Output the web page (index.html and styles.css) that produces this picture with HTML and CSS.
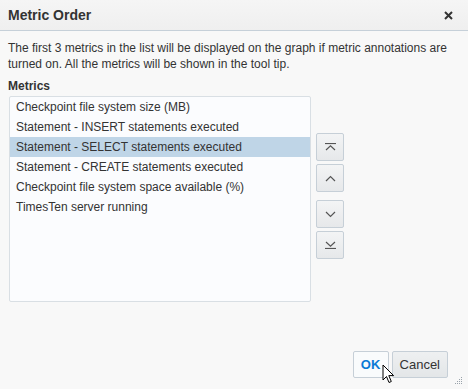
FILE: index.html
```html
<!DOCTYPE html>
<html lang="en">
<head>
  <meta charset="UTF-8">
  <meta name="viewport" content="width=device-width, initial-scale=1.0">
  <title>Metric Order</title>
  <link rel="stylesheet" href="styles.css">
</head>
<body>

  <div class="dialog">
    <div class="titlebar">
      <span class="title">Metric Order</span>
      <span class="close">
        <svg width="9" height="9" viewBox="0 0 9 9"><path d="M1 1L8 8M8 1L1 8" stroke="#333" stroke-width="2"/></svg>
      </span>
    </div>

    <div class="content">
      <p class="desc">The first 3 metrics in the list will be displayed on the graph if metric annotations are turned on. All the metrics will be shown in the tool tip.</p>
      <div class="label">Metrics</div>

      <div class="picker">
        <ul class="list">
          <li>Checkpoint file system size (MB)</li>
          <li>Statement - INSERT statements executed</li>
          <li class="selected">Statement - SELECT statements executed</li>
          <li>Statement - CREATE statements executed</li>
          <li>Checkpoint file system space available (%)</li>
          <li>TimesTen server running</li>
        </ul>

        <div class="movers">
          <div class="group">
            <button class="mover" title="Move to top">
              <svg width="11" height="8" viewBox="0 0 11 8"><path d="M0 0.5H11" stroke="#555" stroke-width="1.2"/><path d="M1 7L5.5 2.8L10 7" fill="none" stroke="#555" stroke-width="1.2"/></svg>
            </button>
            <button class="mover" title="Move up">
              <svg width="11" height="7" viewBox="0 0 11 7"><path d="M1 6L5.5 1.5L10 6" fill="none" stroke="#555" stroke-width="1.2"/></svg>
            </button>
          </div>
          <div class="group">
            <button class="mover" title="Move down">
              <svg width="11" height="7" viewBox="0 0 11 7"><path d="M1 1L5.5 5.5L10 1" fill="none" stroke="#555" stroke-width="1.2"/></svg>
            </button>
            <button class="mover" title="Move to bottom">
              <svg width="11" height="8" viewBox="0 0 11 8"><path d="M1 1L5.5 5.2L10 1" fill="none" stroke="#555" stroke-width="1.2"/><path d="M0 7.5H11" stroke="#555" stroke-width="1.2"/></svg>
            </button>
          </div>
        </div>
      </div>
    </div>

    <div class="footer">
      <button class="btn ok">OK</button>
      <button class="btn">Cancel</button>
    </div>

    <!-- mouse pointer over the OK button -->
    <svg class="cursor" width="13" height="20" viewBox="0 0 13 20">
      <path d="M1 1V16L4.5 12.5L7 18.5L9.3 17.5L6.8 11.6H11.6Z" fill="#fff" stroke="#000" stroke-width="1" stroke-linejoin="round"/>
    </svg>

    <!-- resize grip -->
    <svg class="grip" width="8" height="8" viewBox="0 0 8 8">
      <g fill="#9aa3ab">
        <rect x="6" y="0" width="1" height="1"/>
        <rect x="4" y="2" width="1" height="1"/><rect x="6" y="2" width="1" height="1"/>
        <rect x="2" y="4" width="1" height="1"/><rect x="4" y="4" width="1" height="1"/><rect x="6" y="4" width="1" height="1"/>
        <rect x="0" y="6" width="1" height="1"/><rect x="2" y="6" width="1" height="1"/><rect x="4" y="6" width="1" height="1"/><rect x="6" y="6" width="1" height="1"/>
      </g>
    </svg>
  </div>

</body>
</html>
```

FILE: styles.css
```css
body {
  margin: 0;
  font-family: "Liberation Sans", Arial, sans-serif;
  color: #333;
  background-color: #f8f8f8;
}

.dialog {
  position: relative;
  width: 468px;
  height: 389px;
  display: flex;
  flex-direction: column;
  background-color: #f8f8f8;
  overflow: hidden;
}

.titlebar {
  height: 30px;
  display: flex;
  align-items: center;
  justify-content: space-between;
  padding: 0 15px 0 8px;
  background: linear-gradient(#f5f5f5, #efefef);
  border-bottom: 1px solid #c6d0d9;
  flex-shrink: 0;
}

.title {
  font-size: 14px;
  font-weight: bold;
  color: #333;
}

.close {
  display: flex;
  margin-top: 1px;
}

.content {
  flex: 1;
  padding: 9px 8px 0 8px;
}

.desc {
  margin: 0;
  font-size: 12px;
  line-height: 16px;
}

.label {
  margin-top: 6px;
  font-size: 12px;
  font-weight: bold;
  line-height: 16px;
}

.picker {
  display: flex;
  align-items: flex-start;
  gap: 5px;
  margin-top: 2px;
}

.list {
  list-style: none;
  margin: 0 0 0 1px;
  padding: 0;
  width: 300px;
  height: 204px;
  background-color: #fbfcfe;
  border: 1px solid #d9dfe4;
  border-radius: 2px;
}

.list li {
  height: 20px;
  line-height: 20px;
  padding-left: 6px;
  font-size: 12px;
  color: #333;
}

.list li.selected {
  background-color: #bfd5e7;
}

.movers {
  display: flex;
  flex-direction: column;
  gap: 8px;
  margin-top: 37px;
}

.group {
  display: flex;
  flex-direction: column;
  gap: 3px;
}

.mover {
  width: 28px;
  height: 28px;
  padding: 0;
  display: flex;
  align-items: center;
  justify-content: center;
  background: linear-gradient(#f3f4f5, #e6e8ea);
  border: 1px solid #c6cfd7;
  border-radius: 2px;
}

.footer {
  display: flex;
  justify-content: flex-end;
  gap: 3px;
  padding: 0 20px 11px 0;
}

.btn {
  height: 27px;
  padding: 0 7px;
  font-family: "Liberation Sans", Arial, sans-serif;
  font-size: 13px;
  color: #333;
  background: linear-gradient(#eef0f1, #e3e6e8);
  border: 1px solid #c6cfd7;
  border-radius: 2px;
}

.btn.ok {
  width: 36px;
  font-weight: bold;
  color: #0a7ad6;
  background: #f9fbfc;
}

.cursor {
  position: absolute;
  left: 382px;
  top: 364px;
}

.grip {
  position: absolute;
  left: 455px;
  top: 377px;
}
```
